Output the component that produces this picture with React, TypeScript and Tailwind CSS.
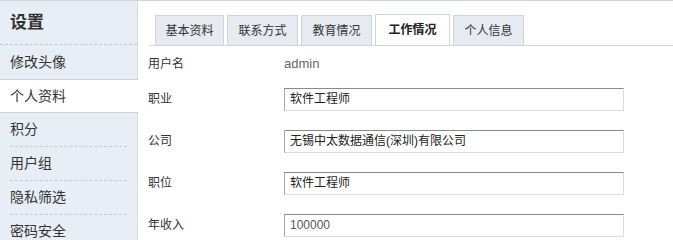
import React from "react";

const menu = ["积分", "用户组", "隐私筛选", "密码安全"];

const tabs = [
  { name: "基本资料", w: "w-[69px]" },
  { name: "联系方式", w: "w-[71px]" },
  { name: "教育情况", w: "w-[71px]" },
  { name: "工作情况", w: "w-[75px]", active: true },
  { name: "个人信息", w: "w-[71px]" },
];

const fields = [
  { label: "职业", value: "软件工程师" },
  { label: "公司", value: "无锡中太数据通信(深圳)有限公司" },
  { label: "职位", value: "软件工程师" },
  { label: "年收入", value: "100000", muted: true },
];

const App = () => {
  return (
    <div className="flex w-[673px] h-[240px] overflow-hidden bg-white border-t border-[#cfd4da] text-[#333] font-['Liberation_Sans','Noto_Sans_CJK_SC',sans-serif]">
      {/* Sidebar */}
      <div className="w-[138px] shrink-0 bg-[#e8eef5] border-r border-[#d6dde5]">
        <div className="h-[44px] flex items-center pl-[10px] text-[17px] font-bold border-b border-dashed border-[#c2c9d1]">
          设置
        </div>
        <div className="h-[34px] flex items-center pl-[10px] text-[14px]">
          修改头像
        </div>
        <div className="h-[34px] flex items-center pl-[10px] text-[14px] bg-white border-y border-[#cdd2d8] mr-[-1px]">
          个人资料
        </div>
        {menu.map((item, i) => (
          <div key={item}>
            {i > 0 && (
              <div className="mx-[10px] border-t border-dashed border-[#c6ccd3]" />
            )}
            <div className="h-[33px] flex items-center pl-[10px] text-[14px]">
              {item}
            </div>
          </div>
        ))}
      </div>

      {/* Content */}
      <div className="flex-1 pl-[10px]">
        <div className="ml-[2px] pt-[13px] pl-[5px] flex gap-[3px] border-b border-[#cfd4da]">
          {tabs.map((t) => (
            <div
              key={t.name}
              className={
                t.active
                  ? `${t.w} h-[31px] mb-[-1px] flex items-center justify-center text-[12px] font-bold text-[#222] bg-white border border-b-0 border-[#cfd4da]`
                  : `${t.w} h-[30px] mt-[1px] flex items-center justify-center text-[12px] text-[#333] bg-[#e6ebf1] border border-b-0 border-[#cfd4da]`
              }
            >
              {t.name}
            </div>
          ))}
        </div>

        <div className="text-[12px]">
          <div className="h-[32px] pt-[3px] flex items-center">
            <span className="w-[136px]">用户名</span>
            <span className="text-[#666] text-[13px]">admin</span>
          </div>
          {fields.map((f) => (
            <div key={f.label} className="h-[42px] flex items-center">
              <span className="w-[136px]">{f.label}</span>
              <div
                className={
                  "w-[340px] h-[23px] flex items-center pl-[5px] border border-t-[#8a8a8a] border-l-[#a8a8a8] border-r-[#dcdcdc] border-b-[#dcdcdc] " +
                  (f.muted ? "text-[#5a5560]" : "text-[#222]")
                }
              >
                {f.value}
              </div>
            </div>
          ))}
        </div>
      </div>
    </div>
  );
};

export default App;
